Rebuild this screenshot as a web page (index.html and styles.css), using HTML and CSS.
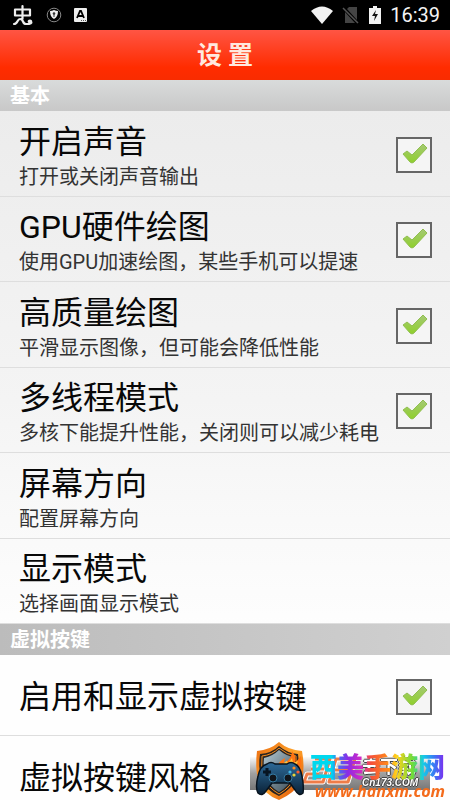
FILE: index.html
```html
<!DOCTYPE html>
<html lang="zh-CN">
<head>
<meta charset="utf-8">
<meta name="viewport" content="width=device-width, initial-scale=1">
<title>设置</title>
<link rel="stylesheet" href="styles.css">
</head>
<body>
<svg class="defs" aria-hidden="true">
  <defs>
    <linearGradient id="leaf" x1="0" y1="0" x2="0" y2="1"><stop offset="0" stop-color="#a5c975"/><stop offset="1" stop-color="#8fd02b"/></linearGradient>
    <symbol id="tick" viewBox="0 0 36 36"><path d="M7 17l4-3 5 4L27 7l4 4L18 25q-2 2-4 0z" fill="url(#leaf)" stroke="#91bf50" stroke-width="1" stroke-linejoin="round"/></symbol>
  </defs>
</svg>
<div class="status">
  <div class="status-group">
    <svg viewBox="0 0 22 22" width="22" height="22" fill="none" stroke="#eee" stroke-width="2.200" stroke-linecap="round" stroke-linejoin="round"><path d="M3 5.500h15v6H3zM10.500 2v13M2 20c4 0 3-5 6-5 4 0 2 5 6 5 5 0 6-1 5-3-1-1-3 0-2 1"/></svg>
    <svg viewBox="0 0 16 16" width="16" height="16"><circle cx="8" cy="8" r="6.800" fill="none" stroke="#888"/><path d="M4 4q2 0 4-1 2 1 4 1 0 6-4 8-4-2-4-8z" fill="#eee"/><circle cx="8" cy="6.500" r="1.300" fill="#333"/><path d="M8 7v3" stroke="#333"/></svg>
    <svg viewBox="0 0 14 16" width="14" height="16"><rect x="0" y="1" width="13" height="14" rx="1" fill="#eee"/><path d="M3 11l3-7h1l3 7M4 9h5" fill="none" stroke="#000" stroke-width="1.800"/><path d="M7 13.500h5" stroke="#555" stroke-dasharray="1 1"/></svg>
  </div>
  <div class="status-group status-right">
    <svg viewBox="0 0 22 18" width="22" height="18"><path d="M0 5Q11-4 22 5L11 18z" fill="#f2f2f2"/></svg>
    <svg viewBox="0 0 18 18" width="18" height="18"><path d="M7 1h8v13L5 3zM3 6l10 11H3z" fill="#444"/><path d="M1 2l15 15" stroke="#555" stroke-width="1.500"/></svg>
    <svg viewBox="0 0 12 18" width="12" height="18"><path d="M4 0h4v2h4v16H0V2h4z" fill="#f2f2f2"/><path d="M7 4l-4 6h3l-1 5 4-7H6z" fill="#111"/></svg>
    <time class="clock">16:39</time>
  </div>
</div>
<header class="header"><h1>设 置</h1></header>
<main>
  <section>
    <h2 class="section-title">基本</h2>
    <ul class="list">
      <li><label class="row"><span class="copy"><span class="title">开启声音</span><span class="sub">打开或关闭声音输出</span></span><span class="check"><input type="checkbox" checked><svg><use href="#tick"/></svg></span></label></li>
      <li><label class="row"><span class="copy"><span class="title">GPU硬件绘图</span><span class="sub">使用GPU加速绘图，某些手机可以提速</span></span><span class="check"><input type="checkbox" checked><svg><use href="#tick"/></svg></span></label></li>
      <li><label class="row"><span class="copy"><span class="title">高质量绘图</span><span class="sub">平滑显示图像，但可能会降低性能</span></span><span class="check"><input type="checkbox" checked><svg><use href="#tick"/></svg></span></label></li>
      <li><label class="row"><span class="copy"><span class="title">多线程模式</span><span class="sub">多核下能提升性能，关闭则可以减少耗电</span></span><span class="check"><input type="checkbox" checked><svg><use href="#tick"/></svg></span></label></li>
      <li><button class="row" type="button"><span class="copy"><span class="title">屏幕方向</span><span class="sub">配置屏幕方向</span></span></button></li>
      <li><button class="row" type="button"><span class="copy"><span class="title">显示模式</span><span class="sub">选择画面显示模式</span></span></button></li>
    </ul>
  </section>
  <section>
    <h2 class="section-title section-title-dark">虚拟按键</h2>
    <ul class="list list-single">
      <li><label class="row"><span class="title">启用和显示虚拟按键</span><span class="check"><input type="checkbox" checked><svg><use href="#tick"/></svg></span></label></li>
      <li><button class="row" type="button"><span class="title">虚拟按键风格</span></button></li>
    </ul>
  </section>
</main>
<aside class="mark">
  <div class="plate">
    <svg class="blocks" viewBox="0 0 56 30" width="56" height="30" fill="none" stroke-linejoin="round"><g stroke="#fff" stroke-width="5"><path d="M13 2h15l-7 23H2l3-8h12M34 2h19l-7 23H27zM33 13h14M9 12h13"/></g><g stroke="#ee7c48" stroke-width="3"><path d="M13 2h15l-7 23H2l3-8h12M34 2h19l-7 23H27zM33 13h14M9 12h13"/></g></svg>
    <div class="plate-copy"><span class="plate-name">去下载</span><span class="plate-site">Cn173.COM</span></div>
  </div>
  <svg class="emblem" viewBox="0 0 52 60" width="52" height="60">
    <defs>
      <linearGradient id="rim" x1="0" y1="0" x2="1" y2="1"><stop offset="0" stop-color="#e96a10"/><stop offset=".5" stop-color="#ffa52b"/><stop offset="1" stop-color="#d94500"/></linearGradient>
      <linearGradient id="steel" x1="0" y1="0" x2="1" y2="1"><stop offset="0" stop-color="#b4cad5"/><stop offset="1" stop-color="#3a4a54"/></linearGradient>
      <linearGradient id="pad" x1="0" y1="0" x2="0" y2="1"><stop offset="0" stop-color="#2d6a98"/><stop offset="1" stop-color="#0a2136"/></linearGradient>
    </defs>
    <path d="M24 1q9 8 23 9 3 16 0 29-7 13-23 20Q8 53 3 39 0 25 2 10 15 9 24 1z" fill="url(#rim)"/>
    <path d="M24 5q8 7 19 8 2 13-1 24-5 11-18 18Q10 49 6 37 3 25 5 13 17 12 24 5z" fill="#2a2420"/>
    <path d="M24 7q8 7 17 8 1 12-1 21-4 10-16 17Q12 46 8 36 6 25 7 15 17 14 24 7z" fill="none" stroke="#f58a1c" stroke-width="1"/>
    <path d="M24 9q7 6 15 7 1 12-1 20-4 9-14 15Q14 45 10 35 8 25 9 17 18 15 24 9z" fill="url(#steel)"/>
    <path d="M22 26q2-6 8-9l-1 5q8-4 8-12 5 6 3 12l6-7q2 13-4 18H25z" fill="#ff7412"/>
    <path d="M26 26q3-5 6-6l1 3 4-6 1 5 5-2-3 7H29z" fill="#ffc53a"/>
    <path d="M12 23q4-3 8 0h12q4-3 8 0 5 2 7 12t1 17q-4 4-8-3l-5-7H17l-6 8q-4 6-8 2-3-5 0-17 2-10 9-12z" fill="url(#pad)" stroke="#07131e" stroke-width="1.500"/>
    <path d="M12 27v8M8 31h8" stroke="#071522" stroke-width="3"/>
    <circle cx="18" cy="37" r="4" fill="#10151b" stroke="#347ba4"/><circle cx="33" cy="37" r="4" fill="#10151b" stroke="#347ba4"/>
    <circle cx="39" cy="27" r="1.600" fill="#ff8b22"/><circle cx="43" cy="31" r="1.600" fill="#ff5b2b"/><circle cx="35" cy="31" r="1.600" fill="#42b7e8"/><circle cx="39" cy="34" r="1.600" fill="#e8d53a"/>
  </svg>
  <div class="brand"><strong class="brand-name">西美手游网</strong><span class="brand-site">www.hanxm.com</span></div>
</aside>
</body>
</html>
```
FILE: styles.css
```css
* { box-sizing: border-box; }

body {
  margin: 0;
  min-height: 100vh;
  overflow: hidden;
  font-family: Roboto, "Noto Sans CJK SC", sans-serif;
  color: #080808;
  background: linear-gradient(#ececec 110px, #f4f4f4 400px, #fefefe 640px);
}

h1, h2, ul { margin: 0; padding: 0; }
ul { list-style: none; }
.defs { position: absolute; width: 0; height: 0; }

.status {
  display: flex;
  justify-content: space-between;
  align-items: center;
  height: 30px;
  padding: 0 10px 0 12px;
  background: #000;
}
.status-group { display: flex; align-items: center; gap: 12px; }
.status-group svg { display: block; }
.status-right { gap: 9px; }
.clock { font-size: 20px; line-height: 30px; color: #f4f4f4; }

.header {
  display: flex;
  justify-content: center;
  align-items: center;
  height: 50px;
  padding-top: 2px;
  background: linear-gradient(#ff5544, #ff2c00 75%, #f92c00);
}
.header h1 { font-size: 25px; line-height: 36px; font-weight: 700; color: #ffe9df; }

.section-title {
  padding: 2px 10px 0;
  font-size: 20px;
  line-height: 29px;
  font-weight: 700;
  color: #fff;
  background: linear-gradient(#d9dbdb, #c8c8c8);
}
.section-title-dark { background: linear-gradient(90deg, #bcbcbc, #d0d0d0); }

.list { display: grid; grid-auto-rows: 1fr; min-height: 513px; }
.list li { display: grid; border-bottom: 1px solid #dedede; }
.list-single { min-height: 162px; }

.row {
  display: flex;
  justify-content: space-between;
  align-items: center;
  width: 100%;
  padding: 3px 18px 0 19px;
  border: 0;
  background: none;
  font: inherit;
  color: inherit;
  text-align: left;
}
.copy { display: flex; flex-direction: column; padding-top: 4px; }
.title { font-size: 32px; line-height: 40px; }
.sub { font-size: 20px; line-height: 30px; color: #333; white-space: nowrap; }

.check { display: grid; flex: none; }
.check input, .check svg { grid-area: 1 / 1; width: 36px; height: 36px; margin: 0; }
.check input { appearance: none; border: 2px solid #666; background: #f5f5f5; }
.check svg { pointer-events: none; z-index: 1; visibility: hidden; }
.check input:checked + svg { visibility: visible; }

.mark { position: fixed; right: 0; bottom: 0; width: 200px; height: 60px; }
.plate {
  position: absolute;
  left: 0;
  right: 20px;
  top: 17px;
  height: 33px;
  display: flex;
  padding-left: 52px;
  background: linear-gradient(#fafafa, #a0a0a0 50%, #777);
}
.plate-copy {
  display: flex;
  flex-direction: column;
  padding-left: 4px;
  font-weight: 700;
  color: #fff;
  text-shadow: 1px 0 #444, -1px 0 #444, 0 1px #444, 0 -1px #444;
}
.plate-name { font-size: 18px; line-height: 20px; }
.plate-site { font: italic 700 10px/12px "Liberation Sans", sans-serif; }
.emblem { position: absolute; left: 5px; top: 1px; }
.brand { position: absolute; right: 5px; top: 10px; display: flex; flex-direction: column; align-items: flex-end; }
.brand-name {
  font: 900 27px/32px "Noto Sans CJK SC", sans-serif;
  color: transparent;
  background: linear-gradient(90deg, #00d8ee 16%, #3979f5 20%, #8b2be5 28%, #d42bc5 38%, #f5503a 45%, #ff8b1b 58%, #ffd21b 64%, #6fdc3a 76%, #13cbe8 84%, #3979f5 92%, #8325ee);
  background-clip: text;
}
.brand-site { font: italic 700 16px/18px "Open Sans", sans-serif; color: #f46b1b; }
```
